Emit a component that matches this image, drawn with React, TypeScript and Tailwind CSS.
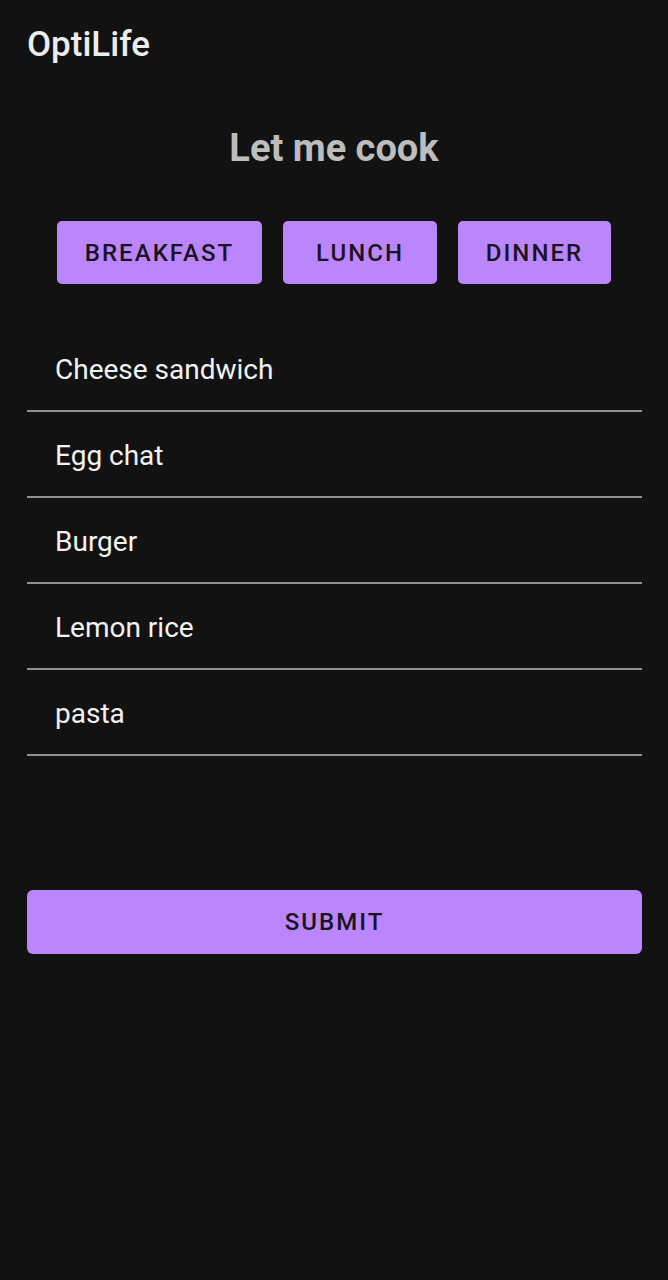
import React from 'react';

const meals = [
    { label: 'Breakfast', width: 'w-[205px]' },
    { label: 'Lunch', width: 'w-[154px]' },
    { label: 'Dinner', width: 'w-[153px]' },
];
const dishes = ['Cheese sandwich', 'Egg chat', 'Burger', 'Lemon rice', 'pasta'];

const App: React.FC = () => {
    return (
        <div className="min-h-screen w-full bg-[#121212] font-['Roboto',sans-serif]">
            <header className="h-[88px] px-[27px] flex items-center">
                <h1 className="text-[35px] font-medium text-[#ececec] leading-none">OptiLife</h1>
            </header>

            <h2 className="mt-[41px] text-center text-[38px] font-bold text-[#bdbdbd] leading-none">Let me cook</h2>

            <div className="mt-[54px] flex justify-center gap-[21px]">
                {meals.map((meal) => (
                    <button
                        key={meal.label}
                        className={`${meal.width} h-[63px] rounded-[5px] bg-[#bb86fc] text-[24px] font-medium uppercase tracking-[0.085em] text-[#1a1320]`}
                    >
                        {meal.label}
                    </button>
                ))}
            </div>

            <ul className="mt-[42px] pl-[27px] pr-[26px]">
                {dishes.map((dish) => (
                    <li
                        key={dish}
                        className="h-[86px] flex items-center pl-[28px] pt-[4px] border-b-2 border-[#8f8f8f] text-[28px] text-[#f2f2f2]"
                    >
                        {dish}
                    </li>
                ))}
            </ul>

            <div className="mt-[134px] pl-[27px] pr-[26px]">
                <button className="w-full h-[64px] rounded-[6px] bg-[#bb86fc] text-[24px] font-medium tracking-[0.085em] text-[#1a1320]">
                    SUBMIT
                </button>
            </div>
        </div>
    );
};

export default App;
